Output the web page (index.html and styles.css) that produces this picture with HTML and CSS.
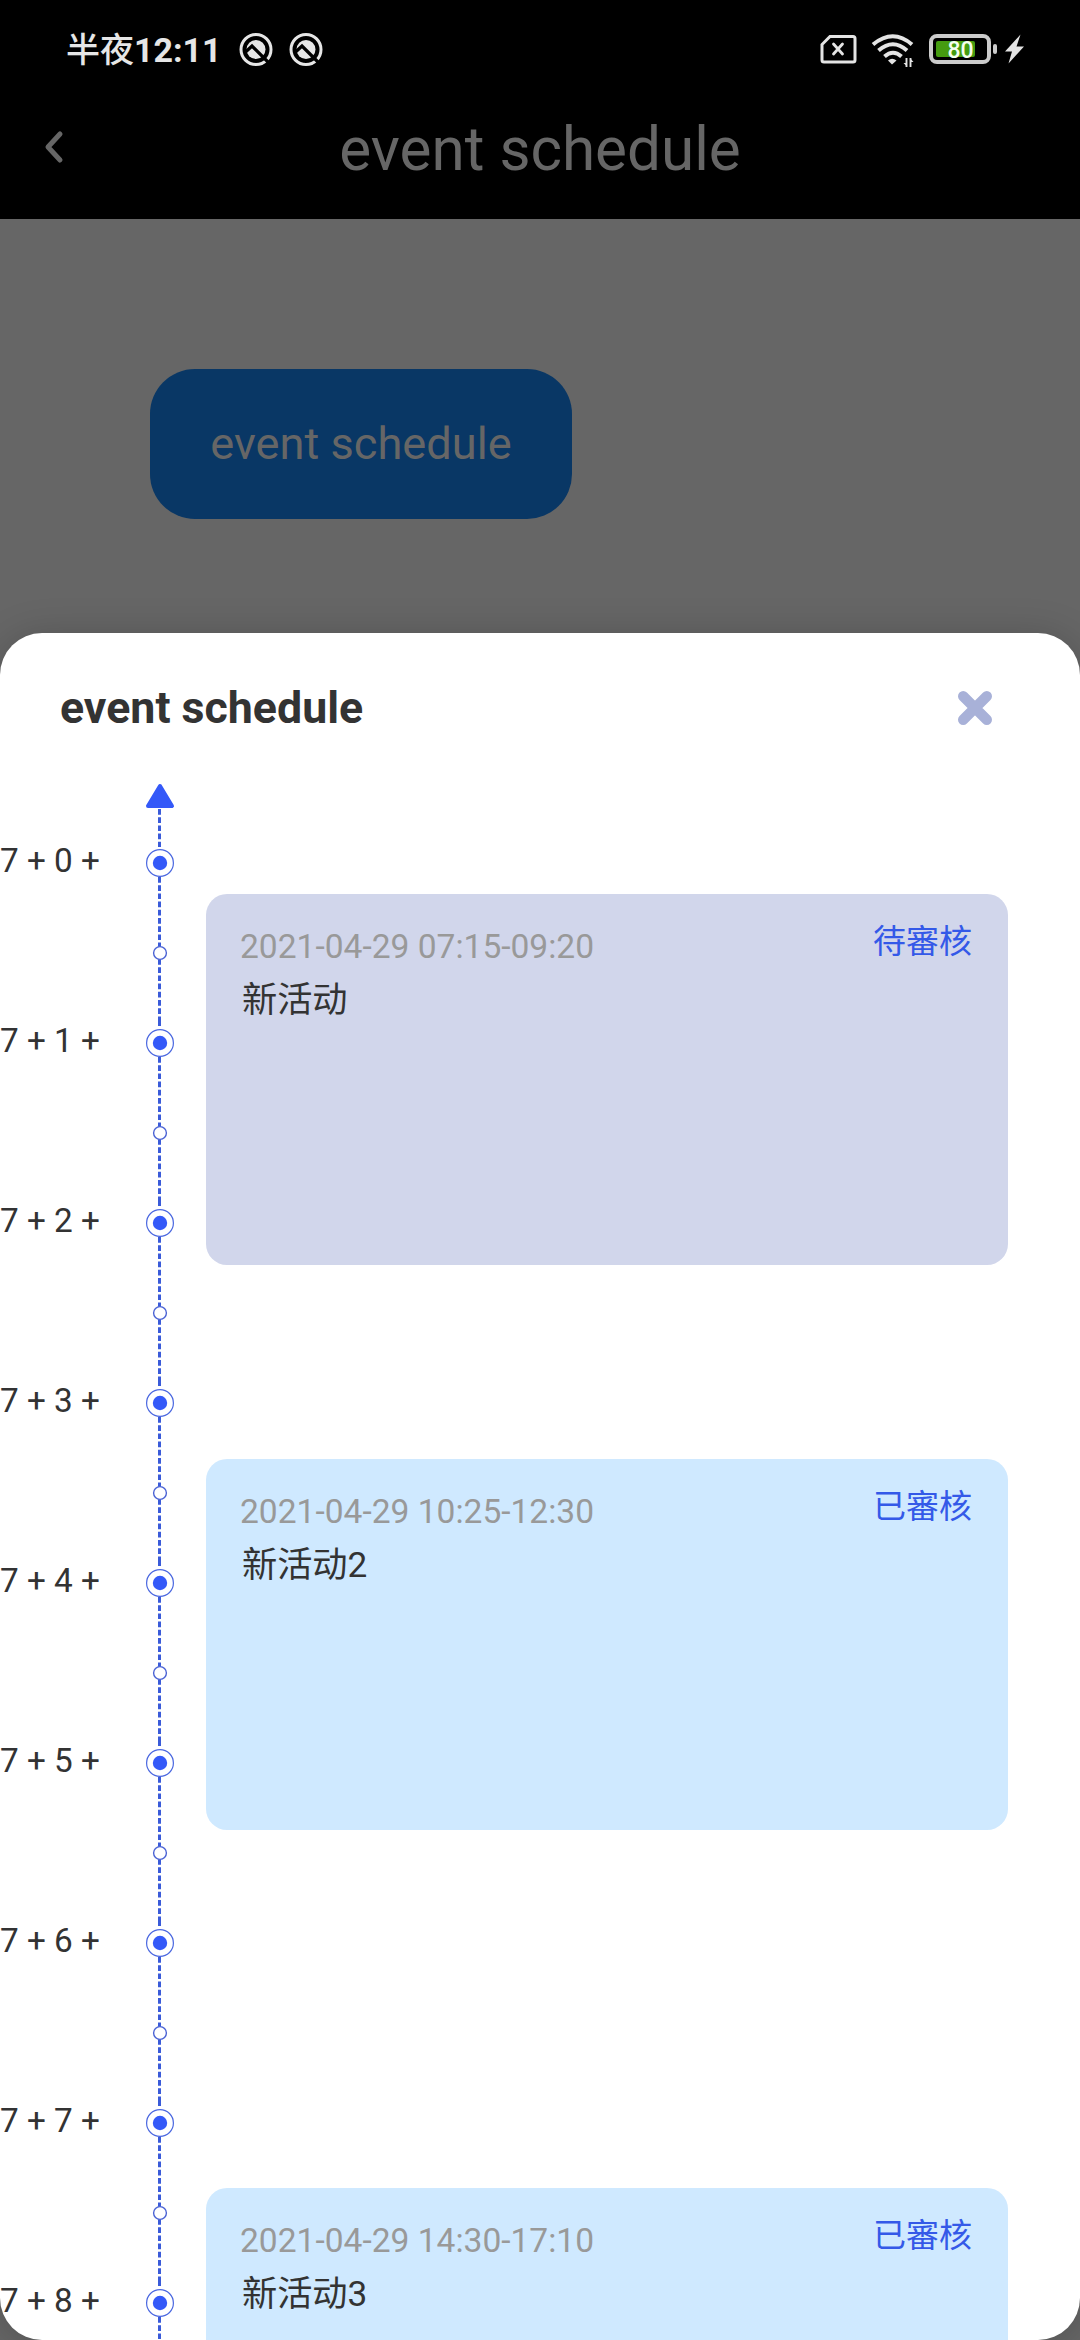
FILE: index.html
```html
<!DOCTYPE html>
<html lang="zh-Hant">
<head>
<meta charset="utf-8">
<title>event schedule</title>
<link rel="stylesheet" href="styles.css">
</head>
<body>
<svg class="defs" aria-hidden="true">
  <defs>
    <symbol id="q" viewBox="0 0 34 34">
      <circle cx="17" cy="16.500" r="15" fill="none" stroke="#e6e6e6" stroke-width="3"/>
      <circle cx="17" cy="16.500" r="9.500" fill="#e6e6e6"/>
      <path d="M6 19.500L13 13L31 31" fill="none" stroke="#000" stroke-width="3.200"/>
    </symbol>
    <symbol id="hour" viewBox="0 0 30 180">
      <g stroke="#3a5bd9" stroke-width="3" stroke-dasharray="5.7 2.5" fill="none">
        <path d="M14.5 28V98"/>
        <path d="M14.5 110V168"/>
        <path d="M14.5 168V177" stroke-dasharray="none"/>
      </g>
      <circle cx="15" cy="14" r="13.4" fill="#fff" stroke="#4a67e0" stroke-width="1.2"/>
      <circle cx="15" cy="14" r="7.2" fill="#3459f8"/>
      <circle cx="15" cy="104" r="6.4" fill="#fff" stroke="#4a62d4" stroke-width="1.4"/>
    </symbol>
  </defs>
</svg>
<div class="screen">
  <div class="statusbar">
    <span class="clock">半夜<b>12:11</b></span>
    <svg class="q-icon"><use href="#q"/></svg>
    <svg class="q-icon"><use href="#q"/></svg>
    <svg class="indicators" viewBox="0 0 210 40">
      <path d="M10 6.5H33a2 2 0 0 1 2 2V30a2 2 0 0 1-2 2H4a2 2 0 0 1-2-2V14.500Z" fill="none" stroke="#e4e4e4" stroke-width="3"/>
      <path d="M13.500 14L22.500 24M22.500 14L13.500 24" stroke="#e4e4e4" stroke-width="2.800" stroke-linecap="round"/>
      <g fill="none" stroke="#e4e4e4" stroke-width="4">
        <path d="M53 14.500Q73 -2 92 14.500"/>
        <path d="M58.500 20.500Q73 8 87 20.500"/>
        <path d="M64.500 26.500Q73 19 81.500 26.500"/>
      </g>
      <path d="M68 30.500Q72 27 76.500 30.500L72 34.500Z" fill="#e4e4e4"/>
      <path d="M86.500 28V37M90.500 37V28" stroke="#e4e4e4" stroke-width="1.900"/>
      <path d="M83.500 33H87V36.500ZM90 28L93.500 32H90Z" fill="#e4e4e4"/>
      <rect x="111" y="6" width="58" height="26" rx="6" fill="none" stroke="#ccc" stroke-width="4"/>
      <rect x="116" y="11" width="39" height="16" rx="2" fill="#459c10"/>
      <rect x="173" y="14" width="4" height="10" rx="2" fill="#ccc"/>
      <path d="M200.500 4.500L185 21.500H192L188.500 33.500L204 16.500H196.500Z" fill="#e4e4e4"/>
      <text class="level" x="140.500" y="27.500">80</text>
    </svg>
  </div>
  <div class="navbar">
    <svg class="back" viewBox="0 0 20 34"><path d="M16 4L4 17L16 30" fill="none" stroke="#666" stroke-width="5" stroke-linecap="round" stroke-linejoin="round"/></svg>
    <div class="nav-title">event schedule</div>
  </div>
  <div class="page">
    <div class="open-button">event schedule</div>
  </div>
  <div class="sheet">
    <div class="sheet-head">
      <div class="sheet-title">event schedule</div>
      <svg class="close" viewBox="0 0 40 40"><path d="M8.200 8.200L31.800 31.800M31.800 8.200L8.200 31.800" stroke="#a8b1d8" stroke-width="10.400" stroke-linecap="round"/></svg>
    </div>
    <div class="timeline">
      <div class="axis">
        <svg class="arrow" viewBox="0 0 30 66">
          <path d="M14.500 26V64" stroke="#3a5bd9" stroke-width="3" stroke-dasharray="5.700 2.500"/>
          <path d="M15 3L27 23H3Z" fill="#3459f8" stroke="#3459f8" stroke-width="4" stroke-linejoin="round"/>
        </svg>
        <div class="hour"><span>7 + 0 +</span><svg><use href="#hour"/></svg></div>
        <div class="hour"><span>7 + 1 +</span><svg><use href="#hour"/></svg></div>
        <div class="hour"><span>7 + 2 +</span><svg><use href="#hour"/></svg></div>
        <div class="hour"><span>7 + 3 +</span><svg><use href="#hour"/></svg></div>
        <div class="hour"><span>7 + 4 +</span><svg><use href="#hour"/></svg></div>
        <div class="hour"><span>7 + 5 +</span><svg><use href="#hour"/></svg></div>
        <div class="hour"><span>7 + 6 +</span><svg><use href="#hour"/></svg></div>
        <div class="hour"><span>7 + 7 +</span><svg><use href="#hour"/></svg></div>
        <div class="hour"><span>7 + 8 +</span><svg><use href="#hour"/></svg></div>
      </div>
      <div class="events">
        <div class="event pending">
          <div class="info"><div class="time">2021-04-29 07:15-09:20</div><div class="name">新活动</div></div>
          <div class="state">待審核</div>
        </div>
        <div class="event second">
          <div class="info"><div class="time">2021-04-29 10:25-12:30</div><div class="name">新活动2</div></div>
          <div class="state">已審核</div>
        </div>
        <div class="event third">
          <div class="info"><div class="time">2021-04-29 14:30-17:10</div><div class="name">新活动3</div></div>
          <div class="state">已審核</div>
        </div>
      </div>
    </div>
  </div>
</div>
</body>
</html>
```

FILE: styles.css
```css
* { box-sizing: border-box; }
body { margin: 0; font-family: Roboto, "Noto Sans CJK SC", sans-serif; }
.defs { display: none; }
.screen {
  width: 1080px;
  height: 2340px;
  background: #666;
  display: flex;
  flex-direction: column;
  overflow: hidden;
}
.statusbar {
  height: 99px;
  flex: none;
  background: #000;
  color: #e6e6e6;
  display: flex;
  align-items: center;
  padding-left: 66px;
}
.clock {
  width: 173px;
  font-size: 34px;
  font-weight: 500;
  line-height: 40px;
  white-space: nowrap;
}
.clock b { font-weight: 700; }
.q-icon { width: 34px; height: 34px; margin-right: 16px; }
.indicators { width: 210px; height: 40px; margin-left: 481px; }
.level { font-size: 23px; font-weight: 500; fill: #f4fff0; text-anchor: middle; }
.navbar {
  height: 120px;
  flex: none;
  background: #000;
  display: flex;
  align-items: flex-start;
  padding: 15px 44px 0;
}
.back { width: 20px; height: 34px; margin-top: 16px; }
.nav-title {
  flex: 1;
  margin-right: 20px;
  text-align: center;
  font-size: 60.2px;
  line-height: 71px;
  color: #666;
}
.page { height: 414px; flex: none; padding: 150px 0 0 150px; }
.open-button {
  width: 422px;
  height: 150px;
  border-radius: 45px;
  background: #093765;
  color: #666;
  font-size: 45.2px;
  line-height: 150px;
  text-align: center;
}
.sheet {
  height: 1707px;
  flex: none;
  background: #fff;
  border-radius: 42px;
  box-shadow: 0 4px 40px rgba(0, 0, 0, .2);
  overflow: hidden;
}
.sheet-head {
  height: 150px;
  display: flex;
  align-items: center;
  justify-content: space-between;
  padding: 0 85px 0 60px;
}
.sheet-title { font-size: 44.7px; font-weight: 700; color: #333; }
.close { width: 40px; height: 40px; }
.timeline { display: flex; }
.axis { width: 206px; }
.arrow { display: block; width: 30px; height: 66px; margin-left: 145px; }
.hour { height: 180px; display: flex; align-items: flex-start; }
.hour span {
  width: 145px;
  color: #333;
  font-size: 33.3px;
  line-height: 40px;
  margin-top: -8px;
  white-space: pre;
}
.hour svg { width: 30px; height: 180px; }
.events { width: 802px; padding-top: 111px; }
.event {
  height: 371px;
  border-radius: 21px;
  background: #cfe9ff;
  display: flex;
  justify-content: space-between;
  padding: 33px 36px 0 34px;
}
.pending { background: #d1d6eb; }
.second { margin-top: 194px; }
.third { margin-top: 358px; }
.time { font-size: 33.55px; line-height: 40px; color: #999; }
.name { font-size: 35.2px; line-height: 50px; margin: 8px 0 0 2px; color: #333; }
.state {
  font-family: Roboto, "Noto Sans CJK TC", sans-serif;
  font-size: 33px;
  line-height: 40px;
  margin-top: -5px;
  color: #3459e8;
}
```
